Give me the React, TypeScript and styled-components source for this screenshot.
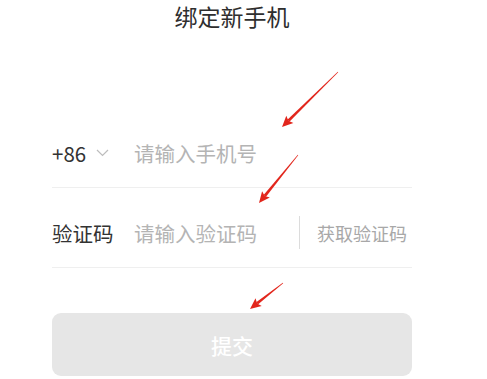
import * as React from 'react';
import styled, { createGlobalStyle } from 'styled-components';

const GlobalStyle = createGlobalStyle`
  html, body {
    margin: 0;
    padding: 0;
    background: #fff;
  }
  body {
    font-family: "Noto Sans CJK SC", "Noto Sans", sans-serif;
    color: #333;
  }
`;

const Page = styled.div`
  position: relative;
  width: 487px;
  height: 379px;
  overflow: hidden;
`;

const Form = styled.div`
  width: 360px;
  margin-left: 52px;
  display: flex;
  flex-direction: column;
`;

const Title = styled.h1`
  margin: 0;
  height: 32px;
  line-height: 32px;
  font-size: 23px;
  font-weight: 400;
  text-align: center;
  color: #2e2e2e;
  margin-bottom: 76px;
`;

const Row = styled.div`
  height: 80px;
  box-sizing: border-box;
  padding-top: 10px;
  display: flex;
  align-items: center;
  border-bottom: 1px solid #efefef;
`;

const Label = styled.div`
  width: 82px;
  flex: 0 0 82px;
  display: flex;
  align-items: center;
  gap: 10px;
  font-size: 20.5px;
  color: #333;
`;

const Placeholder = styled.div`
  flex: 1;
  font-size: 20.5px;
  color: #b4b4b4;
`;

const Divider = styled.div`
  width: 1px;
  height: 33px;
  background: #dcdcdc;
  margin-right: 17px;
`;

const CodeLink = styled.div`
  font-size: 18px;
  color: #a8a8a8;
  padding-right: 5px;
`;

const Submit = styled.button`
  margin-top: 45px;
  height: 63px;
  border: none;
  border-radius: 9px;
  background: #e6e6e6;
  color: #fff;
  font-family: inherit;
  font-size: 21px;
  font-weight: 500;
`;

const Overlay = styled.svg`
  position: absolute;
  left: 0;
  top: 0;
  pointer-events: none;
`;

const Chevron = () => (
  <svg width="13" height="8" viewBox="0 0 13 8">
    <polyline points="1,1 6.5,6.5 12,1" fill="none" stroke="#bdbdbd" strokeWidth="1.2" />
  </svg>
);

type Pt = [number, number];

const arrowShape = (tail: Pt, tip: Pt) => {
  const dx = tip[0] - tail[0];
  const dy = tip[1] - tail[1];
  const len = Math.hypot(dx, dy);
  const ux = dx / len;
  const uy = dy / len;
  const nx = -uy;
  const ny = ux;
  const headLen = 11;
  const headW = 5;
  const bx = tip[0] - ux * headLen;
  const by = tip[1] - uy * headLen;
  const p = (x: number, y: number) => `${x.toFixed(1)},${y.toFixed(1)}`;
  const shaft = [
    p(tail[0] + nx * 0.3, tail[1] + ny * 0.3),
    p(bx + ux * 2 + nx * 1.4, by + uy * 2 + ny * 1.4),
    p(bx + ux * 2 - nx * 1.4, by + uy * 2 - ny * 1.4),
    p(tail[0] - nx * 0.3, tail[1] - ny * 0.3),
  ].join(' ');
  const head = [
    p(tip[0], tip[1]),
    p(bx + nx * headW, by + ny * headW),
    p(bx + ux * 2, by + uy * 2),
    p(bx - nx * headW, by - ny * headW),
  ].join(' ');
  return { shaft, head };
};

const arrows: [Pt, Pt][] = [
  [[338, 72], [282, 127]],
  [[298, 155], [259, 203]],
  [[283, 283], [250, 309]],
];

export default function App() {
  return (
    <Page>
      <GlobalStyle />
      <Form>
        <Title>绑定新手机</Title>
        <Row>
          <Label>
            +86 <Chevron />
          </Label>
          <Placeholder>请输入手机号</Placeholder>
        </Row>
        <Row>
          <Label>验证码</Label>
          <Placeholder>请输入验证码</Placeholder>
          <Divider />
          <CodeLink>获取验证码</CodeLink>
        </Row>
        <Submit>提交</Submit>
      </Form>
      <Overlay width="487" height="379" viewBox="0 0 487 379">
        {arrows.map(([t, h], i) => {
          const s = arrowShape(t, h);
          return (
            <g key={i} fill="#e2261c">
              <polygon points={s.shaft} />
              <polygon points={s.head} />
            </g>
          );
        })}
      </Overlay>
    </Page>
  );
}
